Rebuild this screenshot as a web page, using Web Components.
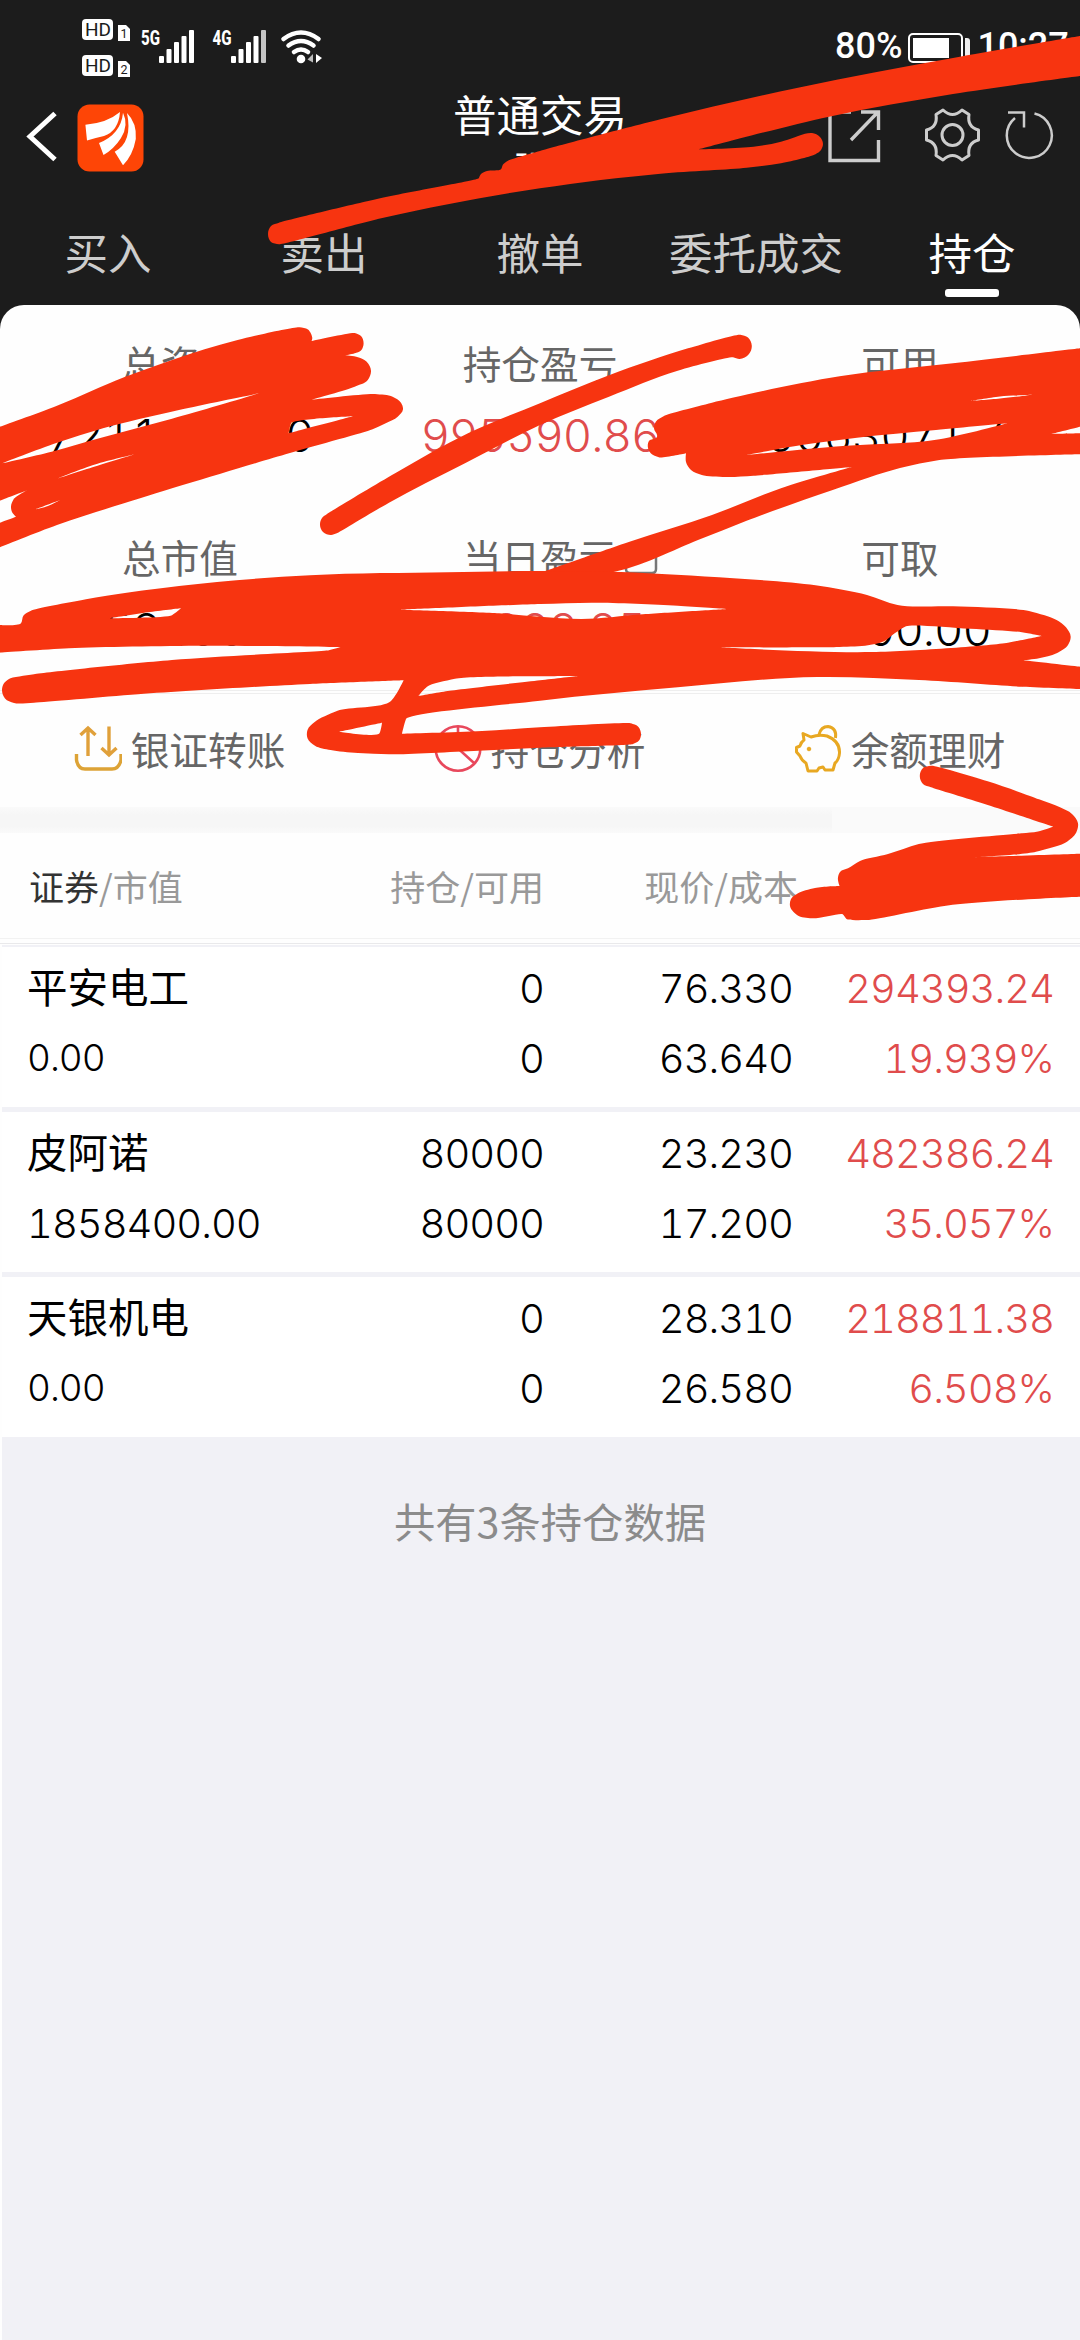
<!DOCTYPE html>
<html lang="zh-CN">
<head>
<meta charset="utf-8">
<title>普通交易</title>
<style>
html,body{margin:0;padding:0}
body{width:1080px;height:2340px;overflow:hidden;background:#1c1c1c;font-family:"Noto Sans CJK SC",sans-serif}
</style>
</head>
<body>
<trade-app></trade-app>
<script>
const define = (name, html, setup) => customElements.define(name, class extends HTMLElement {
  constructor() {
    super();
    this.attachShadow({ mode: 'open' });
  }
  connectedCallback() {
    this.shadowRoot.innerHTML = typeof html === 'function' ? html(this) : html;
    if (setup) setup(this);
  }
});

define('status-bar', `
<style>
:host{display:flex;height:84px;box-sizing:border-box;padding:19px 0 0 82px;justify-content:space-between;align-items:flex-start;color:#fff}
.right{display:flex;align-items:flex-start;width:245px;padding-top:9px;font:500 36px/36px Roboto,sans-serif;white-space:nowrap}
.right svg{margin:5px 6px 0 6px;flex:none}
</style>
<svg width="244" height="60" viewBox="82 19 244 60">
  <g fill="#fff">
    <rect x="82" y="19" width="31" height="21" rx="4"/><path d="M118 25h8l4 4v12h-12z"/>
    <rect x="82" y="55" width="31" height="21" rx="4"/><path d="M118 61h8l4 4v12h-12z"/>
  </g>
  <g fill="#1c1c1c" font-family="Roboto,sans-serif" font-size="18">
    <text x="85" y="36" textLength="26" lengthAdjust="spacingAndGlyphs">HD</text>
    <text x="85" y="72" textLength="26" lengthAdjust="spacingAndGlyphs">HD</text>
    <text x="120.5" y="38" font-size="12.5">1</text><text x="120.5" y="74" font-size="12.5">2</text>
  </g>
  <g fill="#fff" font-family="Roboto,sans-serif" font-weight="800" font-size="20.5">
    <text x="141" y="45" textLength="19" lengthAdjust="spacingAndGlyphs">5G</text>
    <text x="212.500" y="45" textLength="19" lengthAdjust="spacingAndGlyphs">4G</text>
  </g>
  <g fill="#fff">
    <rect x="159" y="56" width="5" height="7" rx="1"/><rect x="166.500" y="49" width="5" height="14" rx="1"/><rect x="174" y="42" width="5" height="21" rx="1"/><rect x="181.500" y="36" width="5" height="27" rx="1"/><rect x="189" y="30" width="5" height="33" rx="1"/>
    <rect x="231" y="56" width="5" height="7" rx="1"/><rect x="238.500" y="49" width="5" height="14" rx="1"/><rect x="246" y="42" width="5" height="21" rx="1"/><rect x="253.500" y="36" width="5" height="27" rx="1"/><rect x="261" y="30" width="5" height="33" rx="1" fill="#c4c4c4"/>
    <circle cx="301" cy="59" r="4.300"/><path d="M313 54v8.500l-5.500-3z" fill="#bbb"/><path d="M316 54v9l6-5z"/>
  </g>
  <g fill="none" stroke="#fff" stroke-width="4.600" stroke-linecap="round"><path d="M283.500 39q17.500-13 35 0M288.500 45.500q12.500-9 25 0M294 52q7-5 14 0"/></g>
</svg>
<div class="right"><span>80%</span>
<svg width="63" height="30" viewBox="0 0 63 30"><rect x="1" y="1" width="53" height="28" rx="4" fill="none" stroke="#fff" stroke-width="2"/><rect x="5" y="5" width="36" height="20" fill="#fff"/><path d="M57 5h2q3 0 3 3v14q0 3-3 3h-2z" fill="#eee"/></svg>
<span>10:27</span></div>`);

define('nav-header', `
<style>
:host{display:grid;grid-template-columns:1fr 180px 1fr;height:126px;color:#fff}
.left,.right{display:flex;align-items:flex-start}
.left{padding:20px 0 0 26px;gap:19px}
.back{margin-top:6px}
.mid{display:flex;flex-direction:column;align-items:center;white-space:nowrap}
.title{font-size:43.500px;line-height:44px;font-weight:400;margin-top:8px}
.sub{font-size:37px;line-height:38px;margin-top:13px;width:54px}
.right{justify-content:flex-end;padding:22px 25px 0 0}
</style>
<div class="left">
<svg class="back" width="32" height="54" viewBox="26 111 32 54"><path d="M55 114.500 30 137.500 55 160.500" fill="none" stroke="#fff" stroke-width="5"/></svg>
<svg width="67" height="68" viewBox="77 104 67 68"><rect x="77.500" y="104.500" width="66" height="67" rx="12" fill="#fe4506"/><g fill="#fff"><path d="M85.400 124.700Q107 123 120 112 118.500 131 104 136 95 138 87 140.500z"/><path d="M123 112.700Q129 125 121 138 114 149 103.500 155L99 143Q121 134 123 112.700z"/><path d="M127 113Q137 123 135.800 139 133 155 123 165.300L114.700 151.700Q133 142 127 113z"/></g></svg>
</div>
<div class="mid"><div class="title">普通交易</div><div class="sub">张</div></div>
<div class="right"><svg width="230" height="58" viewBox="824 106 230 58" fill="none" stroke="#ccc" stroke-width="3.400">
<path d="M850 112H829V160.500H877.500V140M860 112H877.500V130M877 112 850 140"/>
<circle cx="951.500" cy="135" r="10.500" stroke-width="3"/>
<path stroke-width="3" stroke-linejoin="round" d="M942 110Q951.500 119 961 110L968 114.500Q966 127 977.500 130V140Q966 143 968 155.500L961 160Q951.500 151 942 160L935 155.500Q937 143 925.500 140V130Q937 127 935 114.500Z"/>
<path stroke-width="2.500" d="M1033.500 113.500A22.500 22.500 0 1 1 1014 118M1007 112.500H1023V127.500"/></svg></div>`);

define('trade-tabs', `
<style>
:host{display:grid;grid-template-columns:repeat(5,1fr);height:95px;font-size:43.500px;line-height:44px;color:#cdcdcd;text-align:center;white-space:nowrap}
div{display:flex;flex-direction:column;align-items:center;padding-top:20px}
.on{color:#fff}
.on::after{content:"";width:54px;height:8px;border-radius:3px;background:#fff;margin-top:15px}
</style>
<div>买入</div><div>卖出</div><div>撤单</div><div>委托成交</div><div class="on">持仓</div>`);

define('sum-cell', el => `
<style>
:host{display:flex;flex-direction:column;align-items:center;white-space:nowrap}
.l{font-size:38.700px;line-height:40px;color:#666;display:flex;position:relative;font-weight:400}
.l svg{position:absolute;left:161px;top:5px}
.v{font:300 45.500px/46px Inter,sans-serif;font-variant-numeric:tabular-nums;letter-spacing:-1px;margin-top:31px;color:#000}
:host([up]) .v{color:#e04c4c}
</style>
<div class="l"><slot></slot>${el.hasAttribute('icon') ? '<svg width="34" height="34" viewBox="0 0 34 34" fill="none" stroke="#777" stroke-width="2.500"><path d="M14 3H6Q2 3 2 7V28Q2 32 6 32H28Q32 32 32 28V16M20 2H32V12M32 2 16 18"/></svg>' : ''}</div>
<div class="v">${el.getAttribute('value')}</div>`);

define('account-summary', `
<style>
:host{display:grid;grid-template-columns:repeat(3,360px);height:386px;box-sizing:border-box;padding-top:37px;grid-template-rows:194px 1fr;border-bottom:1px solid #eee}
</style>
<sum-cell value="7211000.00">总资产</sum-cell><sum-cell up value="995590.86">持仓盈亏</sum-cell><sum-cell value="9063071.74">可用</sum-cell>
<sum-cell value="1858400.00">总市值</sum-cell><sum-cell up icon value="13888.85">当日盈亏</sum-cell><sum-cell value="5000.00">可取</sum-cell>`);

define('quick-actions', `
<style>
:host{display:grid;grid-template-columns:repeat(3,360px);height:114px;border-top:1px solid #eee;margin-top:2px;box-sizing:border-box}
div{display:flex;justify-content:center;gap:9px;font-size:38.700px;line-height:40px;color:#666;white-space:nowrap;padding-top:34px;box-sizing:border-box;padding-right:1px}
svg{margin-top:-4px;flex:none}
</style>
<div><svg width="48" height="50" viewBox="73 724 48 50" fill="none" stroke="#e0a03a" stroke-width="3.400"><path d="M87 756V728M79.500 735 87 728 94.500 735M108 726.500V755M100.500 748 108 755 115.500 748" /><path stroke="#dda336" d="M75.500 754V760Q77 769 84 769H111Q118 769 120 760V754"/></svg>银证转账</div>
<div><svg width="48" height="50" viewBox="434 724 48 50" fill="none" stroke="#e8485c" stroke-width="2.600"><circle cx="458" cy="748.500" r="22.300"/><path d="M458 726V748.500L474 763"/></svg>持仓分析</div>
<div><svg width="48" height="50" viewBox="793 724 48 50" fill="none" stroke="#e8a822" stroke-width="3" stroke-linejoin="round"><path d="M802 733.500 810 737Q818 734 826 736 839 741 838.500 753 838 760 834 763L832 770H824L822 767 818 768 816 771H807L805 763Q801 761 799 756L795.500 752V747.500L799 746Q800 742 803 740Z"/><path d="M818 734.500Q820 726.500 827 726.500 836 728 834.500 738"/><circle cx="808" cy="749" r="1.800" fill="#e8a822" stroke-width="1"/></svg>余额理财</div>`);

define('table-head', `
<style>
:host{display:grid;grid-template-columns:300px 244px 254px 1fr;height:106px;box-sizing:border-box;padding-top:35px;font-size:35px;line-height:36px;color:#999;white-space:nowrap;border-bottom:1px solid #f2f2f2}
span{text-align:right}.first{text-align:left;padding-left:29px}
b{font-weight:400;color:#333}
</style><span class="first"><b>证券</b>/市值</span><span>持仓/可用</span><span>现价/成本</span>`);

define('holding-row', el => {
  const [name, value, q1, q2, p1, p2, g1, g2] = el.getAttribute('data').split(',');
  return `
<style>
:host{display:grid;grid-template-columns:317px 225px 249px 1fr;grid-template-rows:40px 40px;row-gap:30px;height:160px;box-sizing:border-box;padding:22px 26px 0 0;margin-left:2px;background:#fff;font:300 40px/40px Inter,sans-serif;font-variant-numeric:tabular-nums;letter-spacing:-1px;color:#000;white-space:nowrap}
:host(:not(:last-of-type)){border-bottom:5px solid #f1f1f6;height:165px}
span{text-align:right}
.a{text-align:left;padding-left:25px}
.name{font:400 40.500px/40px "Noto Sans CJK SC",sans-serif;letter-spacing:0;margin-top:-3px}
.zero{font-size:37px;line-height:37px}
.up{color:#e04c4c}
</style>
<span class="a name">${name}</span><span>${q1}</span><span>${p1}</span><span class="up">${g1}</span>
<span class="a ${value === '0.00' ? 'zero' : ''}">${value}</span><span>${q2}</span><span>${p2}</span><span class="up">${g2}</span>`;
});

// Freehand marker strokes: closed outlines through the listed points, with holes cut by the even-odd rule.
const marks = [
 ['268,234 271,226 279,222.700 377,199 478.700,178.300 481,174 487,171 501,169.300 503,164.500 508,160.700 540,151 660.500,119.300 798,87.700 953,58 1080,36 1090,75 1080,76 953,94 829,116.700 699,149.300 753.500,146.700 781,141.700 805,133.700 812,133 820,137 823,144 821,150 815.500,154.300 781,163.300 746.600,167.700 660.500,173.700 540,188.300 385.700,217.300 279,244.300 271,242'],
 ['0,426.700 57,405.700 124,377.300 172,360 237.600,340 299.600,327.300 308,329.500 312.300,338 311.600,341 354.700,333 361,336 363.600,343.300 361,350.500 354.700,353.300 345,355.300 358,357.300 366.700,361.700 371,370.700 367.800,380 354.700,386.700 311.600,399.700 375,394 392.600,396.700 401,402.700 403,409.300 397.700,416.700 385.700,423.300 372,429.500 289,453.300 124,503.300 57,525 0,547.300 0,522.700 16,516.700 12,512 11,506.700 13.500,499.500 27,490.300 0,500.700',
  '2,463.300 57,442.700 103,428.300 179,410 259,393.300 172,418.700 103,437.300 51.600,451.700', '57,478.700 95,464.500 135,454.300 95,466.500', '35.500,509.300 59.600,500.300 48,506', '291,423.300 353,416.300 288.600,433.300'],
 ['320,525 322,518 327,514 396,472.700 468,433.300 540,403.300 609,375.300 688,348.300 740.400,334.700 748,337.500 751.800,345.700 749,354 739.700,359 733,357.300 677.700,370.700 609,396.700 540,425 465,463.300 389,502.700 336.800,533.300 331,535 323,532'],
 ['1080,348.300 953,363.300 839.600,376.300 712,402.700 664,416 656,421.500 654,428.300 657,436.700 649,441 647.800,446.700 651,453.500 658.800,457.300 686,453.300 686,462 691,470 701.800,475 726,477 753.500,475.700 851.600,467 781,488.300 712,515 629.500,541.700 540,573 609,572.700 698,540 746.600,520.700 832.700,490 900,468 939.500,460 1080,454.300 1080,433.300 1051,434 1080,426.700',
  '746.600,455 801.700,445 857,437.700 936,430 1007,423.300 939.500,439.300 832.700,446.700','970.500,401 1000,396.500 1032.500,394.700 1000,398.500'],
 ['21,623.300 23.500,615.500 31,610.700 86,599.300 179,586 310,575.300 447.700,572.300 540,571 609,571.700 719,577.300 815.500,585.300 867,595 897.500,605 953,606.300 1029,611 1056.600,620 1066,627.300 1070.700,636.700 1068,645 1056.600,653.300 1039,658.300 1023,660.300 1080,666.700 1080,689 1022,686.700 919,680 817,677 677.700,687.300 540,700.700 406,719 402,733.700 482,731 540,727.300 631,723.300 638,726.500 641,734 639,740.500 633,744 540,747.700 478.700,750.700 389,754.300 358,753 330.600,750 315,745.700 307.500,738.300 307.500,730 315,721.700 337.500,710.700 391,701 403.600,680.300 310,684 138,694.300 34,702.700 14,703 5,698.500 2,690 3.500,684 9,679 34,674.300 172,660 329,650.300 341,647 206.600,645.700 69,648.300 0,652.700 0,625',
  '578,676 540,680.300 447.700,691 418.400,696 427,686.700 455,678.700 540,676.300','339,731.700 382,722.700 379.500,733.300','109.500,618.300 148,612.300 181,608.300 172,615.300','401,609.700 540,604 591.700,602.700 677.700,605.700 727.700,609 643,614.300 581,619 540,616.700 499,613.300','906,626.300 970.500,628.700 1022,632.300 1041.700,636 1008,642.700 872,652 719,647.300 839.600,647 868,645.300 884,641.300 894.700,633.300'],
 ['919.800,776 923,768 931,765.700 987.700,781.300 1039,799.300 1060,807.300 1072,814 1078,823.300 1076,833 1067,841.700 1036,851.700 970.500,857.300 1080,853.700 1080,896.700 946,905.700 867,920 846.500,919 842.700,914.300 812,918.300 797,915 790,906 791,899 798,893.300 815,888 839.600,886 837.900,878.300 840,872 848,868.300 860,861 888,854 918.800,844 1022,833.300 1038,831.500 1053,826.700 987.700,805 931,787.300 923,784']
];
function outline(list) {
  const p = list.split(' ').map(s => s.split(',').map(Number)), n = p.length;
  const len = p.map((c, i) => Math.hypot(p[(i + 1) % n][0] - c[0], p[(i + 1) % n][1] - c[1]));
  const tangent = p.map((c, i) => {
    const a = p[(i + n - 1) % n], b = p[(i + 1) % n], lu = len[(i + n - 1) % n], lv = len[i];
    const u = [(c[0] - a[0]) / lu, (c[1] - a[1]) / lu], v = [(b[0] - c[0]) / lv, (b[1] - c[1]) / lv];
    if (u[0] * v[0] + u[1] * v[1] < -0.05 || c[0] < 1 || c[0] > 1079) return [0, 0];
    // The shorter edge weighs more, as it describes the bend more closely.
    const t = [u[0] / lu + v[0] / lv, u[1] / lu + v[1] / lv], l = Math.hypot(...t) || 1;
    return [t[0] / l, t[1] / l];
  });
  let d = `M${p[0]}`;
  for (let i = 0; i < n; i++) {
    const j = (i + 1) % n, l = len[i] / 3;
    const ha = Math.min(l, len[(i + n - 1) % n] * .45), hb = Math.min(l, len[j] * .45);
    d += `C${p[i][0] + tangent[i][0] * ha} ${p[i][1] + tangent[i][1] * ha} ${p[j][0] - tangent[j][0] * hb} ${p[j][1] - tangent[j][1] * hb} ${p[j]}`;
  }
  return d + 'Z';
}
define('marker-layer', `
<style>:host{position:absolute;left:0;top:0;pointer-events:none}svg{display:block}</style>
<svg width="1080" height="940" viewBox="0 0 1080 940" fill="#f73410" fill-rule="evenodd">${marks.map(m => `<path d="${m.map(outline).join('')}"/>`).join('')}</svg>`);

define('trade-app', `
<style>
:host{display:block;position:relative;width:1080px;height:2340px;overflow:hidden}
.card{background:#fefefe;border-radius:24px 24px 0 0;height:2035px;display:flex;flex-direction:column}
.band{height:26px;background:linear-gradient(#fafafa,#f6f6f6 30%,#f6f6f6 75%,#fafafa);border-right:248px solid #fafafa}
.rule{height:1px;background:#e9e9eb;margin-top:4px}
.rule2{height:2px;background:#f1f1f6;margin:1px 0 0 2px}
.foot{flex:1;background:#f1f1f6;margin-left:2px;text-align:center;padding:62px 0 0 18px;font-size:41.300px;line-height:42px;color:#8b8b8b}
</style>
<status-bar></status-bar><nav-header></nav-header><trade-tabs></trade-tabs>
<div class="card">
<account-summary></account-summary><quick-actions></quick-actions><div class="band"></div>
<table-head></table-head><div class="rule"></div><div class="rule2"></div>
<holding-row data="平安电工,0.00,0,0,76.330,63.640,294393.24,19.939%"></holding-row>
<holding-row data="皮阿诺,1858400.00,80000,80000,23.230,17.200,482386.24,35.057%"></holding-row>
<holding-row data="天银机电,0.00,0,0,28.310,26.580,218811.38,6.508%"></holding-row>
<div class="foot">共有3条持仓数据</div>
</div>
<marker-layer></marker-layer>`);
</script>
</body>
</html>
